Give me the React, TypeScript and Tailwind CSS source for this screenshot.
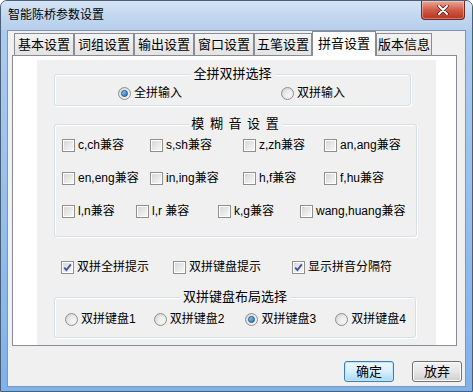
import React from "react"

const FONT = "font-['Liberation_Sans','Noto_Sans_CJK_SC',sans-serif]"

function CheckBox({ checked = false }: { checked?: boolean }) {
  return (
    <span className="relative flex h-[13px] w-[13px] shrink-0 items-center justify-center border border-[#8e8f8f] bg-white">
      <span className="h-[9px] w-[9px] bg-gradient-to-br from-[#d8d8d8] to-[#f7f7f7]" />
      {checked && (
        <svg className="absolute left-[1px] top-[1px]" width="9" height="9" viewBox="0 0 9 9">
          <path d="M1.2 4.6 L3.4 7 L7.8 1.4" fill="none" stroke="#3a569c" strokeWidth="1.8" />
        </svg>
      )}
    </span>
  )
}

function Radio({ checked = false }: { checked?: boolean }) {
  return (
    <span className="flex h-[13px] w-[13px] shrink-0 items-center justify-center rounded-full border border-[#8e8f8f] bg-gradient-to-br from-[#d4d4d4] to-[#f8f8f8]">
      {checked ? (
        <span className="h-[7px] w-[7px] rounded-full border border-[#1c4f84] bg-gradient-to-br from-[#8fd3fa] to-[#1b72b9]" />
      ) : (
        <span className="h-[7px] w-[7px] rounded-full bg-gradient-to-br from-[#e2e2e2] to-[#fbfbfb]" />
      )}
    </span>
  )
}

function Check({ label, checked, w }: { label: string; checked?: boolean; w: string }) {
  return (
    <div className={`flex h-[13px] items-center gap-[3px] ${w}`}>
      <CheckBox checked={checked} />
      <span className="whitespace-nowrap">{label}</span>
    </div>
  )
}

function Opt({ label, checked, w }: { label: string; checked?: boolean; w: string }) {
  return (
    <div className={`flex h-[13px] items-center gap-[3px] ${w}`}>
      <Radio checked={checked} />
      <span className="whitespace-nowrap">{label}</span>
    </div>
  )
}

function GroupBox({ title, className, titleClass = "", children }: { title: string; className: string; titleClass?: string; children: React.ReactNode }) {
  return (
    <div className={`relative rounded-[3px] border border-[#d5dfe5] shadow-[inset_1px_1px_0_#ffffff,1px_1px_0_#ffffff] ${className}`}>
      <span className={`absolute -top-[9px] left-1/2 -translate-x-1/2 whitespace-pre bg-[#f0f0f0] px-[3px] text-[13px] leading-[16px] ${titleClass}`}>
        {title}
      </span>
      {children}
    </div>
  )
}

const tabs = [
  { label: "基本设置", w: "w-[60px]" },
  { label: "词组设置", w: "w-[60px]" },
  { label: "输出设置", w: "w-[60px]" },
  { label: "窗口设置", w: "w-[60px]" },
  { label: "五笔设置", w: "w-[58px]" },
  { label: "拼音设置", w: "w-[64px]", active: true },
  { label: "版本信息", w: "w-[56px]" },
]

export default function App() {
  return (
    <div className={`relative h-[392px] w-[473px] overflow-hidden rounded-t-[7px] border border-[#4b5e78] bg-gradient-to-b from-[#b0cdee] to-[#7fb2ea] text-[12px] leading-[13px] text-black ${FONT}`}>
      {/* title bar */}
      <div className="flex h-[29px] items-center bg-gradient-to-b from-[#d6e5f6] via-[#c2d7f0] to-[#b6cfed] pl-[7px] text-[12px]">
        智能陈桥参数设置
      </div>
      <div className="absolute right-[7px] top-0 flex h-[19px] w-[44px] items-center justify-center rounded-b-[4px] border border-t-0 border-[#6e2a22] bg-gradient-to-b from-[#e9a79a] via-[#cf5b45] to-[#b8321f] shadow-[inset_0_0_0_1px_rgba(255,255,255,0.35)]">
        <svg width="12" height="10" viewBox="0 0 12 10">
          <path d="M2 1 L10 9 M10 1 L2 9" stroke="#4a1a14" strokeWidth="3.4" strokeLinecap="round" />
          <path d="M2 1 L10 9 M10 1 L2 9" stroke="#ffffff" strokeWidth="2" strokeLinecap="round" />
        </svg>
      </div>

      {/* client area */}
      <div className="ml-[6px] h-[357px] w-[459px] border border-[#7f95b3] bg-[#f0f0f0]">
        {/* tab strip */}
        <div className="flex h-[24px] items-end pl-[6px]">
          {tabs.map((t) =>
            t.active ? (
              <div
                key={t.label}
                className={`relative z-10 -mb-px flex h-[25px] items-start justify-center border border-b-0 border-[#898c95] bg-white pt-[4px] text-[13px] leading-[15px] ${t.w}`}
              >
                {t.label}
              </div>
            ) : (
              <div
                key={t.label}
                className={`flex h-[22px] items-center justify-center border border-b-0 border-[#898c95] bg-gradient-to-b from-[#f3f3f3] to-[#e3e3e3] text-[13px] leading-[15px] ${t.w}`}
              >
                {t.label}
              </div>
            )
          )}
        </div>

        {/* tab page */}
        <div className="ml-[4px] h-[291px] w-[445px] border border-[#898c95] bg-white pl-[24px] pt-[4px]">
          <div className="flex h-[285px] w-[399px] flex-col bg-[#f0f0f0] pl-[17px]">
            <GroupBox title="全拼双拼选择" className="mt-[14px] h-[32px] w-[357px]">
              <div className="flex pl-[63px] pt-[12px]">
                <Opt label="全拼输入" checked w="w-[163px]" />
                <Opt label="双拼输入" w="w-[80px]" />
              </div>
            </GroupBox>

            <GroupBox title="模 糊 音 设 置" titleClass="tracking-[1px]" className="mt-[18px] h-[113px] w-[363px]">
              <div className="flex flex-col gap-[20px] pl-[7px] pt-[14px]">
                <div className="flex">
                  <Check label="c,ch兼容" w="w-[88px]" />
                  <Check label="s,sh兼容" w="w-[93px]" />
                  <Check label="z,zh兼容" w="w-[81px]" />
                  <Check label="an,ang兼容" w="w-[90px]" />
                </div>
                <div className="flex">
                  <Check label="en,eng兼容" w="w-[88px]" />
                  <Check label="in,ing兼容" w="w-[93px]" />
                  <Check label="h,f兼容" w="w-[81px]" />
                  <Check label="f,hu兼容" w="w-[90px]" />
                </div>
                <div className="flex">
                  <Check label="l,n兼容" w="w-[74px]" />
                  <Check label="l,r 兼容" w="w-[82px]" />
                  <Check label="k,g兼容" w="w-[82px]" />
                  <Check label="wang,huang兼容" w="w-[110px]" />
                </div>
              </div>
            </GroupBox>

            <div className="ml-[7px] mt-[24px] flex">
              <Check label="双拼全拼提示" checked w="w-[112px]" />
              <Check label="双拼键盘提示" w="w-[119px]" />
              <Check label="显示拼音分隔符" checked w="w-[110px]" />
            </div>

            <GroupBox title="双拼键盘布局选择" className="mt-[23px] h-[41px] w-[362px]">
              <div className="flex pl-[10px] pt-[15px]">
                <Opt label="双拼键盘1" w="w-[89px]" />
                <Opt label="双拼键盘2" w="w-[92px]" />
                <Opt label="双拼键盘3" checked w="w-[90px]" />
                <Opt label="双拼键盘4" w="w-[80px]" />
              </div>
            </GroupBox>
          </div>
        </div>

        {/* buttons */}
        <div className="mt-[15px] flex justify-end gap-[18px] pr-[3px]">
          <button className="flex h-[21px] w-[50px] items-center justify-center rounded-[3px] border border-[#3c7fb1] bg-gradient-to-b from-[#eaf6fd] via-[#d9f0fc] to-[#a7d9f5] text-[13px] shadow-[inset_0_0_0_1px_#bfe6fb]">
            确定
          </button>
          <button className="flex h-[21px] w-[50px] items-center justify-center rounded-[3px] border border-[#707070] bg-gradient-to-b from-[#f2f2f2] via-[#e6e6e6] to-[#cfcfcf] text-[13px] shadow-[inset_0_0_0_1px_#fcfcfc]">
            放弃
          </button>
        </div>
      </div>
    </div>
  )
}
